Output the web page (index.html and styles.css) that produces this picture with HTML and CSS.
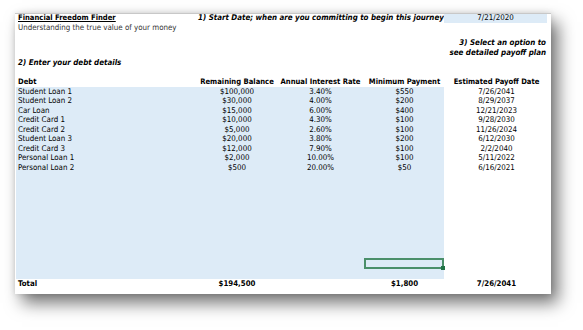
FILE: index.html
```html
<!DOCTYPE html>
<html>
<head>
<meta charset="utf-8">
<link rel="stylesheet" href="styles.css">
</head>
<body>
<div class="page">
  <div class="sheet">
    <div class="grid">
      <div class="c title">Financial Freedom Finder</div>
      <div class="c start">1) Start Date; when are you committing to begin this journey</div>
      <div class="c date">7/21/2020</div>

      <div class="c sub">Understanding the true value of your money</div>
      <div class="c e"></div>

      <div class="c gap1"></div>
      <div class="c select">3) Select an option to<br>see detailed payoff plan</div>

      <div class="c enter">2) Enter your debt details</div>
      <div class="c e"></div>

      <div class="c blank"></div>

      <div class="c head l">Debt</div>
      <div class="c head">Remaining Balance</div>
      <div class="c head">Annual Interest Rate</div>
      <div class="c head">Minimum Payment</div>
      <div class="c head">Estimated Payoff Date</div>

      <div class="c row l b">Student Loan 1</div><div class="c row b">$100,000</div><div class="c row b">3.40%</div><div class="c row b">$550</div><div class="c row">7/26/2041</div>
      <div class="c row l b">Student Loan 2</div><div class="c row b">$30,000</div><div class="c row b">4.00%</div><div class="c row b">$200</div><div class="c row">8/29/2037</div>
      <div class="c row l b">Car Loan</div><div class="c row b">$15,000</div><div class="c row b">6.00%</div><div class="c row b">$400</div><div class="c row">12/21/2023</div>
      <div class="c row l b">Credit Card 1</div><div class="c row b">$10,000</div><div class="c row b">4.30%</div><div class="c row b">$100</div><div class="c row">9/28/2030</div>
      <div class="c row l b">Credit Card 2</div><div class="c row b">$5,000</div><div class="c row b">2.60%</div><div class="c row b">$100</div><div class="c row">11/26/2024</div>
      <div class="c row l b">Student Loan 3</div><div class="c row b">$20,000</div><div class="c row b">3.80%</div><div class="c row b">$200</div><div class="c row">6/12/2030</div>
      <div class="c row l b">Credit Card 3</div><div class="c row b">$12,000</div><div class="c row b">7.90%</div><div class="c row b">$100</div><div class="c row">2/2/2040</div>
      <div class="c row l b">Personal Loan 1</div><div class="c row b">$2,000</div><div class="c row b">10.00%</div><div class="c row b">$100</div><div class="c row">5/11/2022</div>
      <div class="c row l b">Personal Loan 2</div><div class="c row b">$500</div><div class="c row b">20.00%</div><div class="c row b">$50</div><div class="c row">6/16/2021</div>

      <div class="c fill b span3"></div><div class="c fill b"></div><div class="c fill"></div>
      <div class="c sel b span3"></div><div class="c sel b"><div class="selbox"></div></div><div class="c sel"></div>
      <div class="c fill2 b span3"></div><div class="c fill2 b"></div><div class="c fill2"></div>

      <div class="c total l">Total</div>
      <div class="c total">$194,500</div>
      <div class="c total"></div>
      <div class="c total">$1,800</div>
      <div class="c total">7/26/2041</div>
    </div>
  </div>
</div>
</body>
</html>
```

FILE: styles.css
```css
html, body {
  margin: 0;
  padding: 0;
  background: #ffffff;
}
.page {
  padding: 13px 32px 36px 15px;
  width: 536px;
}
.sheet {
  width: 536px;
  height: 281px;
  background: #ffffff;
  border-top: 1px solid #c8c8c8;
  box-sizing: border-box;
  box-shadow: 7px 9px 16px rgba(0,0,0,0.55), 0 0 6px rgba(0,0,0,0.12);
  padding-left: 1px;
  font-family: "DejaVu Sans Condensed", "DejaVu Sans", sans-serif;
  font-size: 7.9px;
  color: #000;
}
.grid {
  display: grid;
  grid-template-columns: 182px 78px 89px 79px 105px;
}
.c {
  white-space: nowrap;
  text-align: center;
  overflow: visible;
}
.l { text-align: left; padding-left: 2px; }
.b { background: #ddebf7; }

.title {
  grid-column: 1 / 2;
  height: 9px;
  line-height: 8px;
  text-align: left;
  padding-left: 2px;
  font-weight: bold;
  font-size: 7.6px;
  text-decoration: underline;
}
.start {
  grid-column: 2 / 5;
  line-height: 8px;
  text-align: right;
  padding-right: 2px;
  font-weight: bold;
  font-style: italic;
}
.date {
  background: #ddebf7;
  line-height: 8px;
  margin-right: 2px;
}
.sub {
  grid-column: 1 / 5;
  text-align: left;
  padding-left: 2px;
  height: 10px;
  line-height: 9px;
  color: #333;
}
.gap1 {
  grid-column: 1 / 5;
  height: 25px;
}
.select {
  height: 25px;
  display: flex;
  flex-direction: column;
  justify-content: flex-end;
  text-align: right;
  padding-right: 3px;
  line-height: 10px;
  font-weight: bold;
  font-style: italic;
  margin-bottom: -1px;
}
.enter {
  grid-column: 1 / 5;
  text-align: left;
  padding-left: 2px;
  height: 10px;
  line-height: 10px;
  font-weight: bold;
  font-style: italic;
}
.blank {
  grid-column: 1 / 6;
  height: 9px;
}
.head {
  font-weight: bold;
  font-size: 7.6px;
  height: 10px;
  line-height: 10px;
}
.row {
  height: 9.47px;
  line-height: 9.47px;
}
.span3 { grid-column: 1 / 4; }
.fill { height: 86px; }
.sel { height: 11px; }
.fill2 { height: 10px; }
.selbox {
  height: 11px;
  box-sizing: border-box;
  border: 2px solid #4a8f6a;
  position: relative;
  margin-left: -1px;
}
.selbox::after {
  content: "";
  position: absolute;
  right: -3px;
  bottom: -3px;
  width: 4px;
  height: 4px;
  background: #217346;
}
.total {
  font-weight: bold;
  font-size: 7.8px;
  height: 11px;
  line-height: 10px;
}
```
